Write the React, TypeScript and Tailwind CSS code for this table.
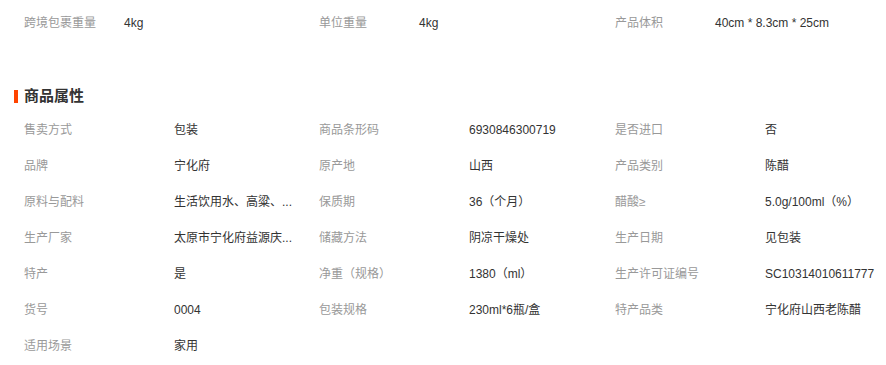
import React from "react";

const font = { fontFamily: '"Liberation Sans", Arial, "Noto Sans CJK SC", sans-serif' };

const top = [
  ["跨境包裹重量", "4kg"],
  ["单位重量", "4kg"],
  ["产品体积", "40cm * 8.3cm * 25cm"],
];

const props: [string, string][] = [
  ["售卖方式", "包装"],
  ["商品条形码", "6930846300719"],
  ["是否进口", "否"],
  ["品牌", "宁化府"],
  ["原产地", "山西"],
  ["产品类别", "陈醋"],
  ["原料与配料", "生活饮用水、高粱、..."],
  ["保质期", "36（个月）"],
  ["醋酸≥", "5.0g/100ml（%）"],
  ["生产厂家", "太原市宁化府益源庆..."],
  ["储藏方法", "阴凉干燥处"],
  ["生产日期", "见包装"],
  ["特产", "是"],
  ["净重（规格）", "1380（ml）"],
  ["生产许可证编号", "SC10314010611777"],
  ["货号", "0004"],
  ["包装规格", "230ml*6瓶/盒"],
  ["特产品类", "宁化府山西老陈醋"],
  ["适用场景", "家用"],
];

export default function App() {
  return (
    <div className="w-[886px] h-[365px] bg-white text-[12px] overflow-hidden" style={font}>
      <div className="pl-[24px] pt-[5px] grid grid-cols-[295px_296px_295px]">
        {top.map(([k, v]) => (
          <div key={k} className="flex h-[36px] items-center">
            <span className="w-[100px] text-[#999999]">{k}</span>
            <span className="text-[#333333]">{v}</span>
          </div>
        ))}
      </div>
      <div className="mt-[45px] flex items-center h-[20px] pl-[14px]">
        <span className="w-[4px] h-[13px] bg-[#ff4400]" />
        <span className="ml-[6px] text-[15px] font-bold text-[#333333]">商品属性</span>
      </div>
      <div className="mt-[6px] pl-[24px] grid grid-cols-[295px_296px_295px]">
        {props.map(([k, v]) => (
          <div key={k} className="flex h-[36px] items-center">
            <span className="w-[150px] shrink-0 text-[#999999]">{k}</span>
            <span className="whitespace-nowrap text-[#333333]">{v}</span>
          </div>
        ))}
      </div>
    </div>
  );
}
